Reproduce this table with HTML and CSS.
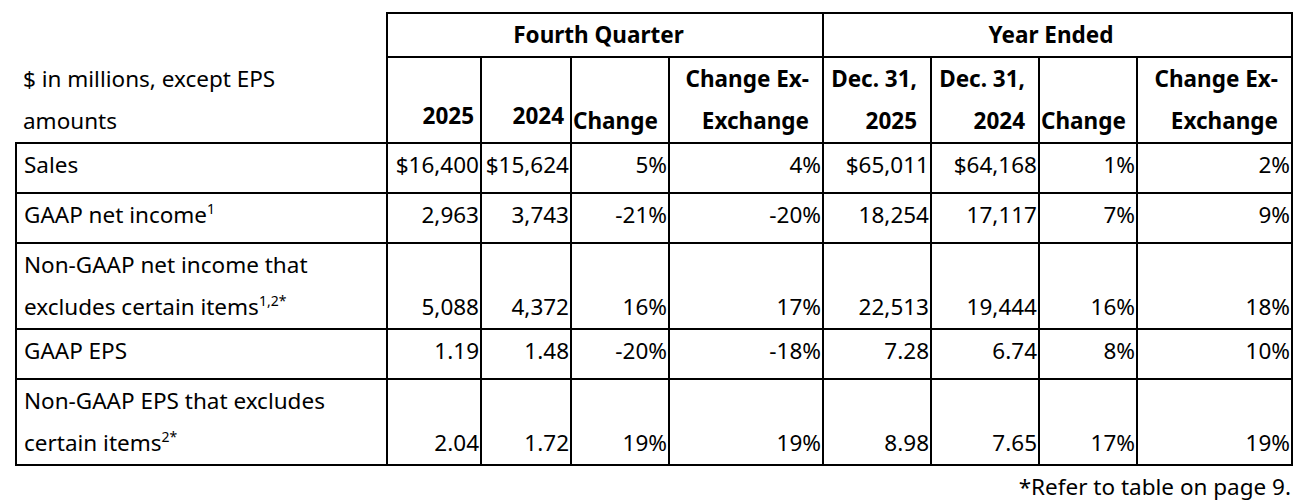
FILE: index.html
```html
<!DOCTYPE html>
<html lang="en">
<head>
<meta charset="utf-8">
<title>Financial highlights</title>
<link rel="stylesheet" href="styles.css">
</head>
<body>
<div class="wrap">
  <table class="fin">
    <colgroup>
      <col class="c-label">
      <col class="c-q1"><col class="c-q2"><col class="c-q3"><col class="c-q4">
      <col class="c-y1"><col class="c-y2"><col class="c-y3"><col class="c-y4">
    </colgroup>
    <thead>
      <tr class="h1">
        <th class="corner" rowspan="2">$ in millions, except EPS<br>amounts</th>
        <th class="group" colspan="4">Fourth Quarter</th>
        <th class="group" colspan="4">Year Ended</th>
      </tr>
      <tr class="h2">
        <th class="yr raised">2025</th>
        <th class="yr raised">2024</th>
        <th class="chg">Change</th>
        <th class="ex">Change Ex-<br>Exchange</th>
        <th class="ex">Dec. 31,<br>2025</th>
        <th class="ex">Dec. 31,<br>2024</th>
        <th class="chg">Change</th>
        <th class="ex">Change Ex-<br>Exchange</th>
      </tr>
    </thead>
    <tbody>
      <tr class="single">
        <td class="lbl">Sales</td>
        <td>$16,400</td><td>$15,624</td><td>5%</td><td>4%</td>
        <td>$65,011</td><td>$64,168</td><td>1%</td><td>2%</td>
      </tr>
      <tr class="single">
        <td class="lbl">GAAP net income<sup>1</sup></td>
        <td>2,963</td><td>3,743</td><td>-21%</td><td>-20%</td>
        <td>18,254</td><td>17,117</td><td>7%</td><td>9%</td>
      </tr>
      <tr class="double">
        <td class="lbl">Non-GAAP net income that<br>excludes certain items<sup>1,2*</sup></td>
        <td>5,088</td><td>4,372</td><td>16%</td><td>17%</td>
        <td>22,513</td><td>19,444</td><td>16%</td><td>18%</td>
      </tr>
      <tr class="single">
        <td class="lbl">GAAP EPS</td>
        <td>1.19</td><td>1.48</td><td>-20%</td><td>-18%</td>
        <td>7.28</td><td>6.74</td><td>8%</td><td>10%</td>
      </tr>
      <tr class="double">
        <td class="lbl">Non-GAAP EPS that excludes<br>certain items<sup>2*</sup></td>
        <td>2.04</td><td>1.72</td><td>19%</td><td>19%</td>
        <td>8.98</td><td>7.65</td><td>17%</td><td>19%</td>
      </tr>
    </tbody>
  </table>
  <p class="note">*Refer to table on page 9.</p>
</div>
</body>
</html>
```
FILE: styles.css
```css
html, body {
  margin: 0;
  padding: 0;
  background: #ffffff;
}

body {
  font-family: "Noto Sans", "Open Sans", sans-serif;
  font-size: 22.5px;
  line-height: 42px;
  color: #000000;
}

.wrap {
  width: 1278px;
  padding: 12px 0 0 15px;
}

.fin {
  border-collapse: collapse;
  table-layout: fixed;
  width: 1278px;
}

.c-label { width: 371px; }
.c-q1 { width: 94px; }
.c-q2 { width: 90px; }
.c-q3 { width: 98px; }
.c-q4 { width: 154px; }
.c-y1 { width: 108px; }
.c-y2 { width: 108px; }
.c-y3 { width: 98px; }
.c-y4 { width: 155px; }

.fin th,
.fin td {
  border: 2px solid #000000;
  padding: 0 1px;
  vertical-align: bottom;
  text-align: right;
  white-space: nowrap;
}

.fin th {
  font-weight: 700;
}

.fin th.corner {
  border: none;
  font-weight: 400;
  text-align: left;
  padding-left: 7px;
}

.fin th.group {
  text-align: center;
  padding-right: 14px;
}

.fin th.yr {
  padding-right: 6px;
}

.fin th.raised {
  padding-bottom: 5px;
}

.fin th.chg {
  text-align: left;
  padding-left: 1px;
}

.fin th.ex {
  padding-right: 13px;
}

.fin td.lbl {
  text-align: left;
  padding-left: 7px;
  vertical-align: top;
}

.fin tr.single td {
  padding-bottom: 6px;
}

.fin sup {
  font-size: 14px;
  line-height: 0;
  vertical-align: 9px;
}

.note {
  margin: 0;
  text-align: right;
  padding-right: 2px;
}
```
